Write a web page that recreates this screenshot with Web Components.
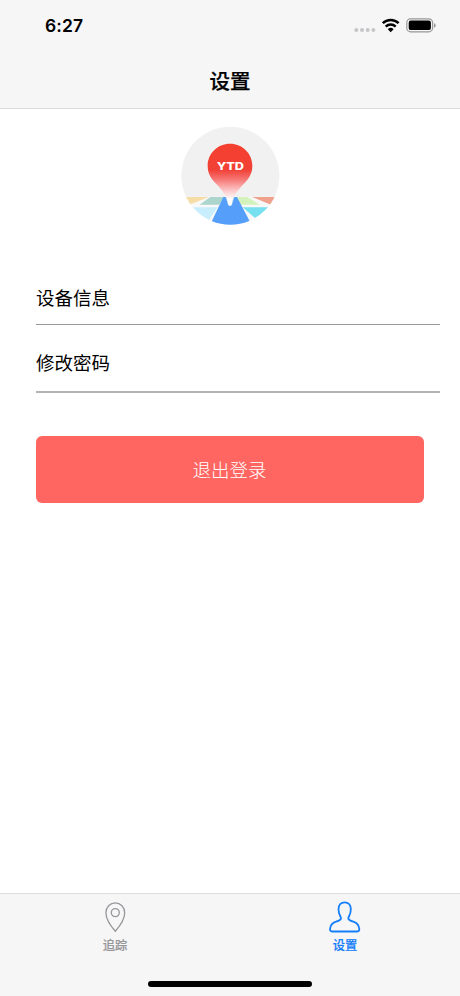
<!DOCTYPE html>
<html lang="zh-CN">
<head>
<meta charset="utf-8">
<title>设置</title>
<style>
html,body{margin:0;height:100%;background:#fff}
body{font-family:Inter,"Noto Sans CJK SC",sans-serif;color:#000}
</style>
</head>
<body>
<settings-screen></settings-screen>
<script>
function define(name, html) {
  const template = document.createElement('template');
  template.innerHTML = html;
  customElements.define(name, class extends HTMLElement {
    constructor() {
      super();
      this.attachShadow({ mode: 'open' }).appendChild(template.content.cloneNode(true));
    }
  });
}

define('status-bar', `
<style>
:host{display:flex;height:52px;box-sizing:border-box;padding:0 24px 0 45px;justify-content:space-between;align-items:center}
time{font-size:17.5px;line-height:20px;font-weight:600;letter-spacing:.1px}
svg{display:block}
</style>
<time>6:27</time>
<svg width="82" height="18" viewBox="354 17 82 18">
  <g fill="#c6c5c7"><circle cx="356.3" cy="30" r="2"/><circle cx="362" cy="30" r="2"/><circle cx="367.7" cy="30" r="2"/><circle cx="373.4" cy="30" r="2"/></g>
  <g fill="none" stroke="#000" stroke-width="2.5"><path d="M382.8 23.2a11.4 11.4 0 0 1 15.8 0"/><path d="M385.7 26.6a7.2 7.2 0 0 1 10 0"/></g>
  <path d="M387.8 29.2a4.2 4.2 0 0 1 5.8 0L390.7 32.2z"/>
  <rect x="406.8" y="18.8" width="25.8" height="13" rx="3.8" fill="none" stroke="#98979a" stroke-width="1.2"/>
  <rect x="408.7" y="20.5" width="22.2" height="9.6" rx="2.2"/>
  <path d="M434 23q1.700 .7 1.700 2.400t-1.700 2.400z" fill="#98979a"/>
</svg>`);

define('nav-header', `
<style>
:host{display:block;height:109px;box-sizing:border-box;background:#f7f6f7;border-bottom:1px solid #dcdbdd}
h1{margin:0;font-size:20.5px;line-height:30px;padding-top:15px;text-align:center;font-weight:500;-webkit-text-stroke:.25px #000}
</style>
<status-bar></status-bar><h1><slot></slot></h1>`);

define('app-logo', `
<style>:host{display:block;width:99px;height:99px}svg{display:block}text{font:800 32px Inter,sans-serif}</style>
<svg width="99" height="99" viewBox="33 33 297 297">
  <defs>
    <clipPath id="disc"><circle cx="181" cy="182" r="147"/></clipPath>
    <linearGradient id="red" x1="0" y1="86" x2="0" y2="272" gradientUnits="userSpaceOnUse"><stop offset="0" stop-color="#f5402f"/><stop offset=".42" stop-color="#f14036"/><stop offset=".57" stop-color="#f67472"/><stop offset=".76" stop-color="#fcc9ca"/><stop offset=".9" stop-color="#fff"/></linearGradient>
  </defs>
  <g clip-path="url(#disc)">
    <path fill="#f1f1f2" d="M33 33h297v297H33z"/>
    <path fill="#fff" d="M33 245h297v85H33z" opacity=".5"/>
    <path fill="#f5dda5" d="M33 246h83L58 269H33z"/>
    <path fill="#abd5cd" d="M121 246h43l-16 23H89z"/>
    <path fill="#d4f2bb" d="M200 246h33l36 23h-56z"/>
    <path fill="#f0a18c" d="M246 246h84v23h-27z"/>
    <path fill="#c8edfc" d="M50 277h93l-23 33-13 20H33z"/>
    <path fill="#76dff0" d="M218 277h112v53h-62l-12-20z"/>
    <path fill="#559ffa" d="M160 246h41l44 84H120z"/>
    <path fill="#b9ddfc" d="M166 246h28l-8 24h-12z" opacity=".6"/>
  </g>
  <path fill="url(#red)" d="M180 86c37 0 67 29 67 66 0 24-10 38-26 55-20 21-31 35-35 59q-1 7-6 7t-6-7c-4-24-15-38-35-59-16-17-26-31-26-55 0-37 30-66 67-66z"/>
  <text x="140" y="164.500" textLength="82" lengthAdjust="spacingAndGlyphs" fill="#fff">YTD</text>
</svg>`);

define('setting-row', `
<style>
:host{display:flex;box-sizing:border-box;height:var(--row-height,67px);padding-bottom:var(--row-pad,13px);align-items:flex-end;border-bottom:var(--row-line,1px solid #98979a);font-size:18.5px;line-height:26px}
</style>
<slot></slot>`);

define('logout-button', `
<style>
:host{display:block}
button{display:block;width:100%;height:67.5px;border:0;border-radius:6px;background:#ff6662;color:#fff;font:300 18.5px/26px Inter,"Noto Sans CJK SC",sans-serif;padding:2px 1px 0 0}
</style>
<button type="button"><slot></slot></button>`);

define('tab-item', `
<style>
:host{flex:1;display:flex;flex-direction:column;align-items:center;font-size:12.3px;line-height:16px;font-weight:500;-webkit-text-stroke:.2px currentColor}
span{padding-top:2px}
</style>
<slot name="icon"></slot><span><slot></slot></span>`);

define('tab-bar', `
<style>
:host{display:flex;flex-direction:column;justify-content:space-between;align-items:center;box-sizing:border-box;height:103px;padding:6px 0 9px;background:#f7f6f7;border-top:1px solid #dcdbdd}
nav{display:flex;width:100%}
.home{width:164px;height:6px;border-radius:3px;background:#000}
</style>
<nav><slot></slot></nav><div class="home"></div>`);

define('settings-screen', `
<style>
:host{display:flex;flex-direction:column;height:996px;background:#fff}
main{flex:1;display:flex;flex-direction:column}
app-logo{margin:17px auto 0 181px}
.list{margin:33px 20px 0 36px}
.second{--row-height:68px;--row-pad:15px;--row-line:2px solid #b3b2b4}
logout-button{margin:42.5px 36px 0}
svg{display:block}
.idle{color:#97969a}.active{color:#147efb}
</style>
<nav-header>设置</nav-header>
<main>
  <app-logo></app-logo>
  <div class="list"><setting-row>设备信息</setting-row><setting-row class="second">修改密码</setting-row></div>
  <logout-button>退出登录</logout-button>
</main>
<tab-bar>
  <tab-item class="idle"><svg slot="icon" width="34" height="36" viewBox="98 900 34 36" fill="none" stroke="currentColor" stroke-width="1.3"><path d="M115.3 931.2c-2.2-2.5-9.4-11.3-9.4-18.5a9.4 9.8 0 0 1 18.8 0c0 7.2-7.2 16-9.4 18.5z"/><circle cx="115.3" cy="912.6" r="4"/></svg>追踪</tab-item>
  <tab-item class="active"><svg slot="icon" width="34" height="36" viewBox="54 45 102 108" fill="none" stroke="currentColor" stroke-width="5.4" stroke-linejoin="round"><path d="M66 139.500H142Q148 139.500 148 133C147 120 142 114 132 110.500C124 108 115.500 106 115 100C114.500 95 122.500 90 122.500 73C122.500 60 115 52 104 52S85.500 60 85.500 73C85.500 90 93.500 95 93 100C92.500 106 84 108 76 110.500C66 114 61 120 60 133Q60 139.500 66 139.500z"/></svg>设置</tab-item>
</tab-bar>`);
</script>
</body>
</html>
